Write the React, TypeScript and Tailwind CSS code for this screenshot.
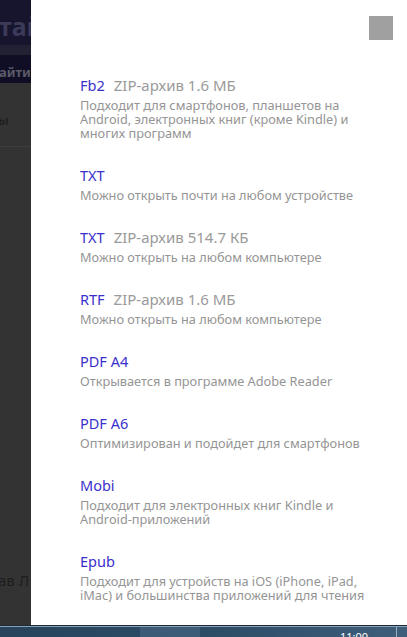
import React from "react";

const items = [
  { t: "Fb2", s: "ZIP-архив 1.6 МБ", d: "Подходит для смартфонов, планшетов на Android, электронных книг (кроме Kindle) и многих программ" },
  { t: "TXT", s: "", d: "Можно открыть почти на любом устройстве" },
  { t: "TXT", s: "ZIP-архив 514.7 КБ", d: "Можно открыть на любом компьютере" },
  { t: "RTF", s: "ZIP-архив 1.6 МБ", d: "Можно открыть на любом компьютере" },
  { t: "PDF A4", s: "", d: "Открывается в программе Adobe Reader" },
  { t: "PDF A6", s: "", d: "Оптимизирован и подойдет для смартфонов" },
  { t: "Mobi", s: "", d: "Подходит для электронных книг Kindle и Android-приложений" },
  { t: "Epub", s: "", d: "Подходит для устройств на iOS (iPhone, iPad, iMac) и большинства приложений для чтения" },
];

export default function App() {
  return (
    <div className="w-[407px] h-[637px] overflow-hidden flex flex-col" style={{ fontFamily: '"Noto Sans", "Open Sans", sans-serif' }}>
      <div className="flex h-[625px]">
        <div className="w-[31px] flex flex-col bg-[#333333] overflow-hidden">
          <div className="h-[45px] shrink-0 bg-[#17152e] flex items-end pb-[6px] overflow-hidden">
            <span className="text-[25px] font-bold text-[#3b3a58] whitespace-nowrap -ml-[1px] leading-none">тай</span>
          </div>
          <div className="h-[10px] shrink-0 bg-[#222134]" />
          <div className="h-[28px] shrink-0 bg-[#0f0e24] flex items-end pb-[3px] overflow-hidden">
            <span className="text-[13px] font-bold text-[#5a5a68] whitespace-nowrap -ml-[1px] leading-[16px]">айти</span>
          </div>
          <div className="h-[64px] shrink-0 border-b border-[#3d3d3d] flex items-end pb-[18px] overflow-hidden">
            <span className="text-[13px] font-semibold text-[#1e1e1e] whitespace-nowrap -ml-[2px] leading-[16px]">ы</span>
          </div>
          <div className="flex-1 flex flex-col justify-end pb-[35px] overflow-hidden">
            <span className="text-[15px] leading-[20px] text-[#1e1e1e] whitespace-nowrap -ml-[2px]">ав Л</span>
          </div>
        </div>
        <div className="flex-1 bg-white relative pl-[49px] pt-[75px]">
          <div className="absolute right-[14px] top-[16px] w-[24px] h-[24px] bg-[#a0a0a0]" />
          <div className="flex flex-col gap-[25px]">
            {items.map((it, i) => (
              <div key={i} className="flex flex-col">
                <div className="flex items-baseline gap-[9px] leading-[20px]">
                  <span className="text-[14.5px] text-[#3a30cc]">{it.t}</span>
                  {it.s && <span className="text-[15px] text-[#9a9a9a]">{it.s}</span>}
                </div>
                <div className="mt-[3px] w-[290px] text-[12.75px] leading-[14px] text-[#959595]">{it.d}</div>
              </div>
            ))}
          </div>
        </div>
      </div>
      <div className="h-[1px] bg-[#1d2a36]" />
      <div className="flex-1 relative bg-gradient-to-r from-[#27445c] via-[#2c4c66] to-[#3f5e7a] border-t border-[#8aa2b8]">
        <div className="absolute left-[140px] top-0 w-[60px] h-full bg-[#4a6886] opacity-60" />
        <span className="absolute right-[39px] top-[4px] text-[11px] leading-[12px] text-white">11:00</span>
        <div className="absolute right-[10px] top-0 w-[1px] h-full bg-[#9ab0c4]" />
      </div>
    </div>
  );
}
